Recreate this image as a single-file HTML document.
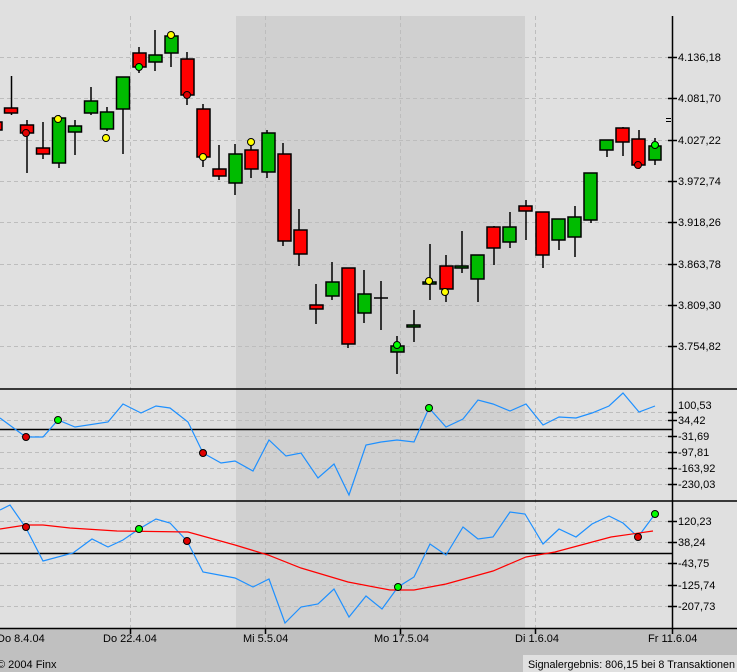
<!DOCTYPE html>
<html><head><meta charset="utf-8"><style>
html,body{margin:0;padding:0;background:#e0e0e0;width:737px;height:672px;overflow:hidden}
svg{display:block}
text{font-family:"Liberation Sans",sans-serif;font-size:11px;fill:#000}
</style></head><body>
<svg width="737" height="672" viewBox="0 0 737 672" xmlns="http://www.w3.org/2000/svg">
<rect x="0" y="0" width="737" height="672" fill="#e0e0e0"/>
<rect x="236" y="16" width="289" height="612" fill="#d0d0d0"/>
<rect x="0" y="628" width="737" height="44" fill="#c0c0c0"/>
<rect x="523" y="655" width="214" height="17" fill="#e0e0e0"/>
<g stroke="#bdbdbd" stroke-dasharray="4,3" stroke-width="1">
<path d="M130.5 16V628M265.5 16V628M400.5 16V628M535.5 16V628"/>
<path d="M0 57.5H668M0 98.5H668M0 140.5H668M0 181.5H668M0 222.5H668M0 264.5H668M0 305.5H668M0 346.5H668"/>
<path d="M0 412.5H668M0 420.5H668M0 436.5H668M0 452.5H668M0 468.5H668M0 484.5H668"/>
<path d="M0 521.5H668M0 542.5H668M0 563.5H668M0 585.5H668M0 606.5H668"/>
</g>
<g stroke="#000" stroke-width="1.5" fill="none">
<path d="M0 389H737M0 501H737M0 429.5H672M0 553.5H672M0 628.5H737"/>
<path d="M672.5 16V628"/>
<path d="M668 57.5H677M668 98.5H677M668 140.5H677M668 181.5H677M668 222.5H677M668 264.5H677M668 305.5H677M668 346.5H677"/>
<path d="M668 412.5H677M668 420.5H677M668 436.5H677M668 452.5H677M668 468.5H677M668 484.5H677"/>
<path d="M668 521.5H677M668 542.5H677M668 563.5H677M668 585.5H677M668 606.5H677"/>
<path d="M130.5 628V634M265.5 628V634M400.5 628V634M535.5 628V634M672.5 628V634"/>
<path d="M666 118.5H671M666 121.5H671" stroke-width="1"/>
</g>
<g stroke="#000" stroke-width="1.5">
<path d="M11.5 76V115M27 120V173M43 122V159M59 115V168M75 120V155M91 87V115M107 107V131M123 77V154M139 47V73M155 30V71M171 33V67M187 52V105M203 104V167M219 145V180M235 144V195M251 142V178M267 130V178M283 143V246M299 209V266M316 284V324M332 262V300M348 268V348M364 270V323M381 281V330M397 336V374M414 310V342M430 244V300M446 255V302M462 231V273M478 255V302M494 226V265M510 212V248M526 200V240M543 212V268M559 219V250M575 206V257M591 173V223M607 140V157M623 127V156M639 130V169M655 138V165"/>
<path d="M374 298H388"/>
</g>
<g stroke="#000" stroke-width="1.5" fill="#ff0000">
<rect x="-3" y="122" width="5" height="8"/>
<rect x="4.5" y="108" width="13" height="5"/>
<rect x="20.5" y="125" width="13" height="8"/>
<rect x="36.5" y="148" width="13" height="6"/>
<rect x="133" y="53" width="13" height="14"/>
<rect x="181" y="59" width="13" height="36"/>
<rect x="197" y="109" width="13" height="48"/>
<rect x="213" y="169" width="13" height="7"/>
<rect x="245" y="150" width="13" height="19"/>
<rect x="278" y="154" width="13" height="87"/>
<rect x="294" y="230" width="13" height="24"/>
<rect x="310" y="305" width="13" height="4"/>
<rect x="342" y="268" width="13" height="76"/>
<rect x="440" y="266" width="13" height="23"/>
<rect x="487" y="227" width="13" height="21"/>
<rect x="519" y="206" width="13" height="5"/>
<rect x="536" y="212" width="13" height="43"/>
<rect x="616" y="128" width="13" height="14"/>
<rect x="632" y="139" width="13" height="26"/>
</g>
<g stroke="#000" stroke-width="1.5" fill="#00bb00">
<rect x="52.5" y="118" width="13" height="45"/>
<rect x="68.5" y="126" width="13" height="6"/>
<rect x="84.5" y="101" width="13" height="12"/>
<rect x="100.5" y="112" width="13" height="17"/>
<rect x="116.5" y="77" width="13" height="32"/>
<rect x="149" y="55" width="13" height="7"/>
<rect x="165" y="36" width="13" height="17"/>
<rect x="229" y="154" width="13" height="29"/>
<rect x="262" y="133" width="13" height="39"/>
<rect x="326" y="282" width="13" height="14"/>
<rect x="358" y="294" width="13" height="19"/>
<rect x="391" y="346" width="13" height="6"/>
<rect x="407" y="325" width="13" height="2"/>
<rect x="423" y="282" width="13" height="2"/>
<rect x="455" y="266" width="13" height="2"/>
<rect x="471" y="255" width="13" height="24"/>
<rect x="503" y="227" width="13" height="15"/>
<rect x="552" y="219" width="13" height="21"/>
<rect x="568" y="217" width="13" height="20"/>
<rect x="584" y="173" width="13" height="47"/>
<rect x="600" y="140" width="13" height="10"/>
<rect x="649" y="146" width="12" height="14"/>
</g>
<g stroke="#000" stroke-width="1">
<circle cx="26" cy="133" r="3.5" fill="#e00000"/>
<circle cx="58" cy="119" r="3.5" fill="#ffff00"/>
<circle cx="106" cy="138" r="3.5" fill="#ffff00"/>
<circle cx="139" cy="67" r="3.5" fill="#00ff00"/>
<circle cx="171" cy="35" r="3.5" fill="#ffff00"/>
<circle cx="187" cy="95" r="3.5" fill="#e00000"/>
<circle cx="203" cy="157" r="3.5" fill="#ffff00"/>
<circle cx="251" cy="142" r="3.5" fill="#ffff00"/>
<circle cx="397" cy="345" r="3.5" fill="#00ff00"/>
<circle cx="429" cy="281" r="3.5" fill="#ffff00"/>
<circle cx="445" cy="292" r="3.5" fill="#ffff00"/>
<circle cx="638" cy="165" r="3.5" fill="#e00000"/>
<circle cx="655" cy="145" r="3.5" fill="#00ff00"/>
</g>
<polyline fill="none" stroke="#1e90ff" stroke-width="1.2" points="0,418 19,432 26,437 43,437 58,420 75,427 108,422 123,404 141,413 156,406 170,408 188,422 203,453 221,463 235,461 253,471 269,440 286,456 301,453 318,478 334,464 349,495 366,445 381,442 397,440 414,442 429,408 446,427 463,419 478,400 493,404 510,411 526,404 543,425 559,417 576,418 592,413 609,406 623,393 639,412 655,406"/>
<polyline fill="none" stroke="#1e90ff" stroke-width="1.2" points="0,510 10,505 26,528 43,561 73,553 92,539 108,547 123,540 139,529 156,519 170,523 187,541 203,572 235,578 253,587 269,579 285,623 301,607 318,604 334,589 349,617 366,596 382,609 398,587 414,577 430,544 446,555 463,527 478,539 493,537 510,512 525,514 543,544 559,529 576,537 592,524 609,516 623,523 638,537 655,514"/>
<polyline fill="none" stroke="#ff0000" stroke-width="1.2" points="0,529 26,525 43,525 70,528 117,531 188,532 235,545 268,555 301,568 348,582 390,590 414,590 446,584 493,571 526,557 555,552 611,537 653,531"/>
<g stroke="#000" stroke-width="1">
<circle cx="26" cy="437" r="3.5" fill="#e00000"/>
<circle cx="58" cy="420" r="3.5" fill="#00ff00"/>
<circle cx="203" cy="453" r="3.5" fill="#e00000"/>
<circle cx="429" cy="408" r="3.5" fill="#00ff00"/>
<circle cx="26" cy="527" r="3.5" fill="#e00000"/>
<circle cx="139" cy="529" r="3.5" fill="#00ff00"/>
<circle cx="187" cy="541" r="3.5" fill="#e00000"/>
<circle cx="398" cy="587" r="3.5" fill="#00ff00"/>
<circle cx="638" cy="537" r="3.5" fill="#e00000"/>
<circle cx="655" cy="514" r="3.5" fill="#00ff00"/>
</g>
<g>
<text x="678" y="61">4.136,18</text>
<text x="678" y="102">4.081,70</text>
<text x="678" y="144">4.027,22</text>
<text x="678" y="185">3.972,74</text>
<text x="678" y="226">3.918,26</text>
<text x="678" y="268">3.863,78</text>
<text x="678" y="309">3.809,30</text>
<text x="678" y="350">3.754,82</text>
<text x="678" y="409">100,53</text>
<text x="678" y="424">34,42</text>
<text x="678" y="440">-31,69</text>
<text x="678" y="456">-97,81</text>
<text x="678" y="472">-163,92</text>
<text x="678" y="488">-230,03</text>
<text x="678" y="525">120,23</text>
<text x="678" y="546">38,24</text>
<text x="678" y="567">-43,75</text>
<text x="678" y="589">-125,74</text>
<text x="678" y="610">-207,73</text>
<text x="-3" y="642">Do 8.4.04</text>
<text x="103" y="642">Do 22.4.04</text>
<text x="243" y="642">Mi 5.5.04</text>
<text x="374" y="642">Mo 17.5.04</text>
<text x="515" y="642">Di 1.6.04</text>
<text x="648" y="642">Fr 11.6.04</text>
<text x="-3" y="668">© 2004 Finx</text>
<text x="528" y="668" textLength="207" lengthAdjust="spacingAndGlyphs">Signalergebnis: 806,15 bei 8 Transaktionen</text>
</g>
</svg>
</body></html>
